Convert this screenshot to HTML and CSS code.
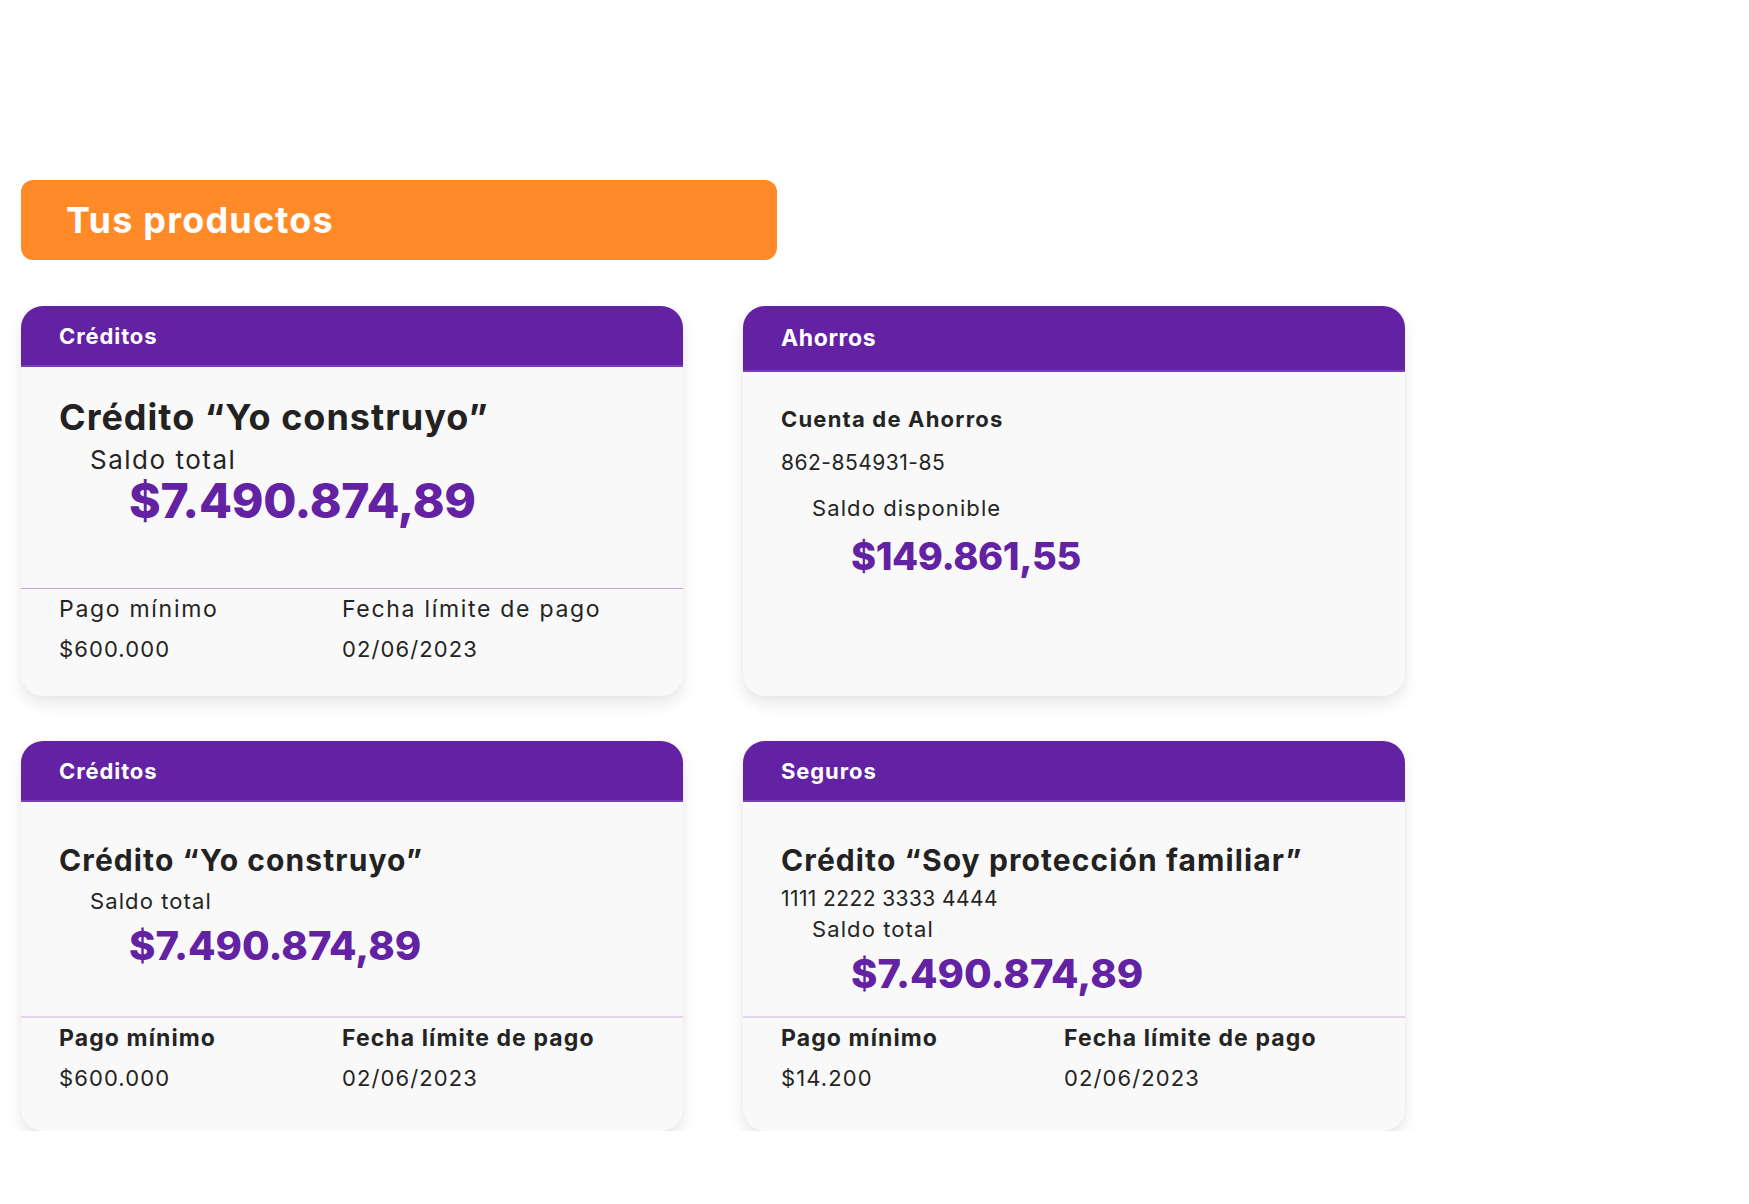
FILE: index.html
```html
<!DOCTYPE html>
<html lang="es">
<head>
<meta charset="utf-8">
<title>Tus productos</title>
<link rel="stylesheet" href="styles.css">
</head>
<body>
<main class="page">
  <div class="banner"><h1 class="banner-title">Tus productos</h1></div>
  <section class="grid">
    <article class="card">
      <header class="card-head"><span class="card-tag">Créditos</span></header>
      <div class="card-main c1">
        <h2 class="title-lg">Crédito “Yo construyo”</h2>
        <p class="saldo-lg">Saldo total</p>
        <p class="amount-lg">$7.490.874,89</p>
      </div>
      <div class="card-foot f1">
        <div class="col"><p class="lbl">Pago mínimo</p><p class="val">$600.000</p></div>
        <div class="col"><p class="lbl">Fecha límite de pago</p><p class="val">02/06/2023</p></div>
      </div>
    </article>

    <article class="card">
      <header class="card-head tall"><span class="card-tag big">Ahorros</span></header>
      <div class="card-main c2">
        <h3 class="acct-name">Cuenta de Ahorros</h3>
        <p class="acct-num">862-854931-85</p>
        <p class="saldo-sm">Saldo disponible</p>
        <p class="amount-md">$149.861,55</p>
      </div>
    </article>

    <article class="card">
      <header class="card-head"><span class="card-tag">Créditos</span></header>
      <div class="card-main c3">
        <h2 class="title-md">Crédito “Yo construyo”</h2>
        <p class="saldo-sm">Saldo total</p>
        <p class="amount-sm">$7.490.874,89</p>
      </div>
      <div class="card-foot f3">
        <div class="col"><p class="lbl bold">Pago mínimo</p><p class="val">$600.000</p></div>
        <div class="col"><p class="lbl bold">Fecha límite de pago</p><p class="val">02/06/2023</p></div>
      </div>
    </article>

    <article class="card">
      <header class="card-head"><span class="card-tag">Seguros</span></header>
      <div class="card-main c4">
        <h2 class="title-md">Crédito “Soy protección familiar”</h2>
        <p class="card-num">1111 2222 3333 4444</p>
        <p class="saldo-sm">Saldo total</p>
        <p class="amount-sm">$7.490.874,89</p>
      </div>
      <div class="card-foot f3">
        <div class="col"><p class="lbl bold">Pago mínimo</p><p class="val">$14.200</p></div>
        <div class="col"><p class="lbl bold">Fecha límite de pago</p><p class="val">02/06/2023</p></div>
      </div>
    </article>
  </section>
</main>
</body>
</html>
```
FILE: styles.css
```css
* { box-sizing: border-box; }
html, body { margin: 0; padding: 0; background: #ffffff; }
body { font-family: Inter, "Open Sans", sans-serif; color: #242424; }
p, h1, h2, h3 { margin: 0; }

.page { padding: 180px 0 0 21px; }

.banner {
  width: 756px;
  height: 80px;
  background: #ff8a27;
  border-radius: 12px;
  display: flex;
  align-items: center;
  padding-left: 45px;
}
.banner-title {
  color: #ffffff;
  font-size: 36px;
  font-weight: 700;
  letter-spacing: 1.2px;
}

.grid {
  margin-top: 46px;
  display: grid;
  grid-template-columns: 662px 662px;
  column-gap: 60px;
  row-gap: 45px;
}

.card {
  height: 390px;
  background: #f9f9f9;
  border-radius: 22px;
  overflow: hidden;
  box-shadow: 0 8px 16px rgba(0, 0, 0, 0.09), 0 0 4px rgba(0, 0, 0, 0.04);
  display: flex;
  flex-direction: column;
}

.card-head {
  height: 61px;
  background: #6321a3;
  border-bottom: 2px solid #7a3dbb;
  display: flex;
  align-items: center;
  padding-left: 38px;
  flex-shrink: 0;
}
.card-head.tall { height: 66px; }
.card-tag { color: #fff; font-size: 22px; font-weight: 700; letter-spacing: 0.9px; }
.card-tag.big { font-size: 23px; letter-spacing: 0.6px; }

.card-main { flex: 1; padding-left: 38px; }
.c1 { padding-top: 28px; }
.c2 { padding-top: 33px; }
.c3 { padding-top: 39px; }
.c4 { padding-top: 39px; }

.title-lg { font-size: 36px; line-height: 44px; font-weight: 700; color: #222; letter-spacing: 1px; }
.title-md { font-size: 30px; line-height: 38px; font-weight: 700; color: #222; letter-spacing: 1.1px; }

.saldo-lg { font-size: 26px; line-height: 30px; margin: 6px 0 0 31px; letter-spacing: 1.5px; }
.saldo-sm { font-size: 22px; line-height: 28px; margin: 8px 0 0 31px; letter-spacing: 1.1px; }

.amount-lg { font-size: 48px; line-height: 56px; font-weight: 800; color: #6321a3; margin: -2px 0 0 70px; letter-spacing: -0.3px; }
.amount-sm { font-size: 40px; line-height: 50px; font-weight: 800; color: #6321a3; margin: 6px 0 0 70px; letter-spacing: 0; }
.amount-md { font-size: 38px; line-height: 50px; font-weight: 800; color: #6321a3; margin: 9px 0 0 70px; letter-spacing: -0.4px; }

.acct-name { font-size: 22px; line-height: 28px; font-weight: 700; letter-spacing: 1.2px; }
.acct-num { font-size: 21px; line-height: 28px; margin-top: 16px; letter-spacing: 0.5px; }
.c2 .saldo-sm { margin-top: 17px; }
.card-num { font-size: 21px; line-height: 28px; margin-top: 6px; letter-spacing: 0.4px; }
.c4 .saldo-sm { margin-top: 2px; }

.card-foot {
  display: flex;
  padding: 6px 0 0 38px;
  border-top: 1px solid #c7a7da;
}
.card-foot.f1 { height: 108px; }
.card-foot.f3 { height: 115px; border-top: 2px solid #e4d4ee; }
.col { width: 283px; }
.lbl { font-size: 23px; line-height: 28px; letter-spacing: 1.7px; }
.lbl.bold { font-weight: 700; letter-spacing: 1.1px; }
.val { font-size: 22px; line-height: 28px; margin-top: 12px; letter-spacing: 1.1px; }
```
